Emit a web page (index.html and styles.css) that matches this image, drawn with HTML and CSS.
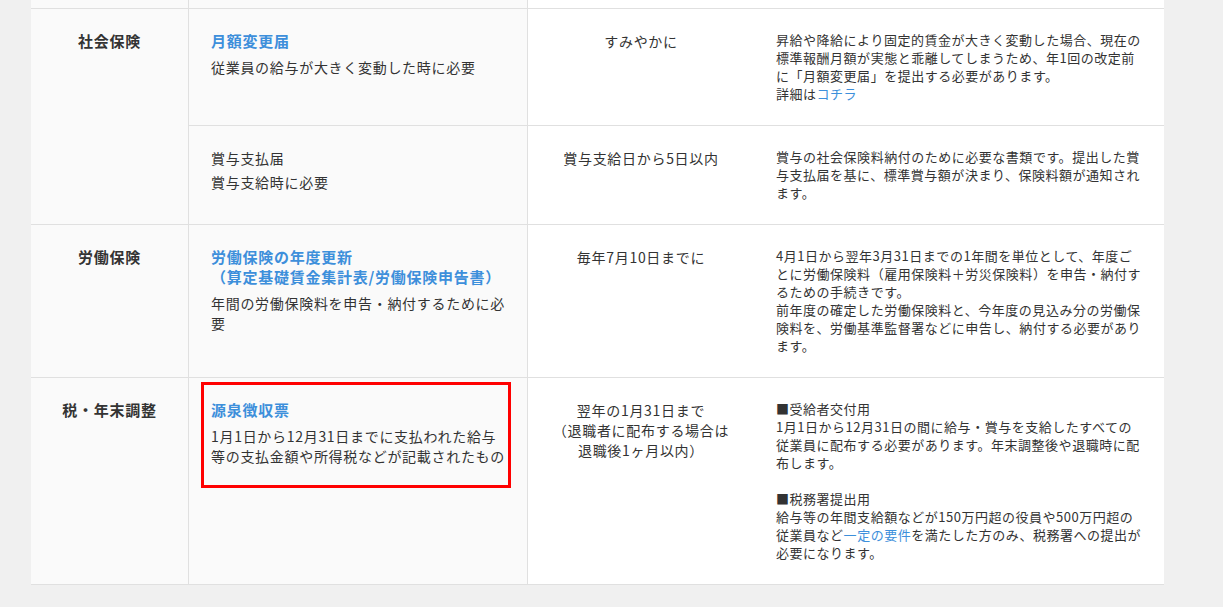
FILE: index.html
```html
<!DOCTYPE html>
<html lang="ja">
<head>
<meta charset="utf-8">
<title>必要書類一覧</title>
<link rel="stylesheet" href="styles.css">
</head>
<body>
<div class="page">
  <table class="doc-table">
    <colgroup>
      <col class="c-cat"><col class="c-doc"><col class="c-due"><col class="c-note">
    </colgroup>
    <tbody>
      <tr class="row-cut">
        <td class="cat"><div class="cut-fill"></div></td>
        <td class="doc"><div class="cut-fill"></div></td>
        <td class="due"><div class="cut-fill"></div></td>
        <td class="note"><div class="cut-fill"></div></td>
      </tr>
      <tr>
        <th class="cat" rowspan="2">社会保険</th>
        <td class="doc">
          <a class="doc-title" href="#">月額変更届</a>
          <p class="doc-desc">従業員の給与が大きく変動した時に必要</p>
        </td>
        <td class="due">すみやかに</td>
        <td class="note">昇給や降給により固定的賃金が大きく変動した場合、現在の標準報酬月額が実態と乖離してしまうため、年1回の改定前に「月額変更届」を提出する必要があります。<br>詳細は<a class="note-link" href="#">コチラ</a></td>
      </tr>
      <tr>
        <td class="doc">
          <p class="doc-name">賞与支払届</p>
          <p class="doc-desc">賞与支給時に必要</p>
        </td>
        <td class="due">賞与支給日から5日以内</td>
        <td class="note">賞与の社会保険料納付のために必要な書類です。提出した賞与支払届を基に、標準賞与額が決まり、保険料額が通知されます。</td>
      </tr>
      <tr>
        <th class="cat">労働保険</th>
        <td class="doc">
          <a class="doc-title" href="#">労働保険の年度更新<br>（算定基礎賃金集計表/労働保険申告書）</a>
          <p class="doc-desc">年間の労働保険料を申告・納付するために必要</p>
        </td>
        <td class="due">毎年7月10日までに</td>
        <td class="note">4月1日から翌年3月31日までの1年間を単位として、年度ごとに労働保険料（雇用保険料＋労災保険料）を申告・納付するための手続きです。<br>前年度の確定した労働保険料と、今年度の見込み分の労働保険料を、労働基準監督署などに申告し、納付する必要があります。</td>
      </tr>
      <tr>
        <th class="cat">税・年末調整</th>
        <td class="doc">
          <div class="doc-inner is-marked">
            <a class="doc-title" href="#">源泉徴収票</a>
            <p class="doc-desc">1月1日から12月31日までに支払われた給与等の支払金額や所得税などが記載されたもの</p>
          </div>
        </td>
        <td class="due">翌年の1月31日まで<br>（退職者に配布する場合は<br>退職後1ヶ月以内）</td>
        <td class="note">■受給者交付用<br>1月1日から12月31日の間に給与・賞与を支給したすべての従業員に配布する必要があります。年末調整後や退職時に配布します。<br><br>■税務署提出用<br>給与等の年間支給額などが150万円超の役員や500万円超の従業員など<a class="note-link" href="#">一定の要件</a>を満たした方のみ、税務署への提出が必要になります。</td>
      </tr>
    </tbody>
  </table>
</div>
</body>
</html>
```

FILE: styles.css
```css
* {
  box-sizing: border-box;
}

html,
body {
  margin: 0;
  padding: 0;
}

body {
  background: #f0f0f0;
  font-family: "Noto Sans CJK JP", "Noto Sans", sans-serif;
  color: #333333;
}

.page {
  padding-left: 31px;
  min-height: 607px;
}

.doc-table {
  border-collapse: separate;
  border-spacing: 0;
  table-layout: fixed;
  width: 1133px;
}

.c-cat { width: 158px; }
.c-doc { width: 339px; }
.c-due { width: 226px; }
.c-note { width: 410px; }

.doc-table th,
.doc-table td {
  padding: 22px;
  vertical-align: top;
  border-bottom: 1px solid #e0e0e0;
}

.doc-table .row-cut td {
  padding: 0;
}

.cut-fill {
  height: 8px;
}

.cat {
  background: #fafafa;
  border-right: 1px solid #e0e0e0;
  text-align: center;
  font-size: 15px;
  font-weight: 700;
  line-height: 20px;
  letter-spacing: 0.05em;
}

.doc-table td.doc {
  background: #fafafa;
  border-right: 1px solid #e0e0e0;
  padding-right: 16px;
}

.due {
  background: #ffffff;
  text-align: center;
  font-size: 14px;
  line-height: 20px;
  letter-spacing: 0.05em;
}

.note {
  background: #ffffff;
  font-size: 13px;
  line-height: 18px;
  letter-spacing: 0.04em;
}

.doc-title {
  display: block;
  font-size: 15px;
  font-weight: 700;
  line-height: 20px;
  letter-spacing: 0.05em;
  color: #3d8fdb;
  text-decoration: none;
  margin-bottom: 6px;
}

.doc-name {
  margin: 0 0 4px;
  font-size: 14px;
  line-height: 20px;
  letter-spacing: 0.05em;
}

.doc-desc {
  margin: 0;
  font-size: 14px;
  line-height: 20px;
  letter-spacing: 0.05em;
}

.note-link {
  color: #3d8fdb;
  text-decoration: none;
}

.doc-inner {
  position: relative;
}

.is-marked::after {
  content: "";
  position: absolute;
  top: -18px;
  left: -10px;
  right: 0;
  bottom: -22px;
  border: 3px solid #ff0000;
  pointer-events: none;
}
```
